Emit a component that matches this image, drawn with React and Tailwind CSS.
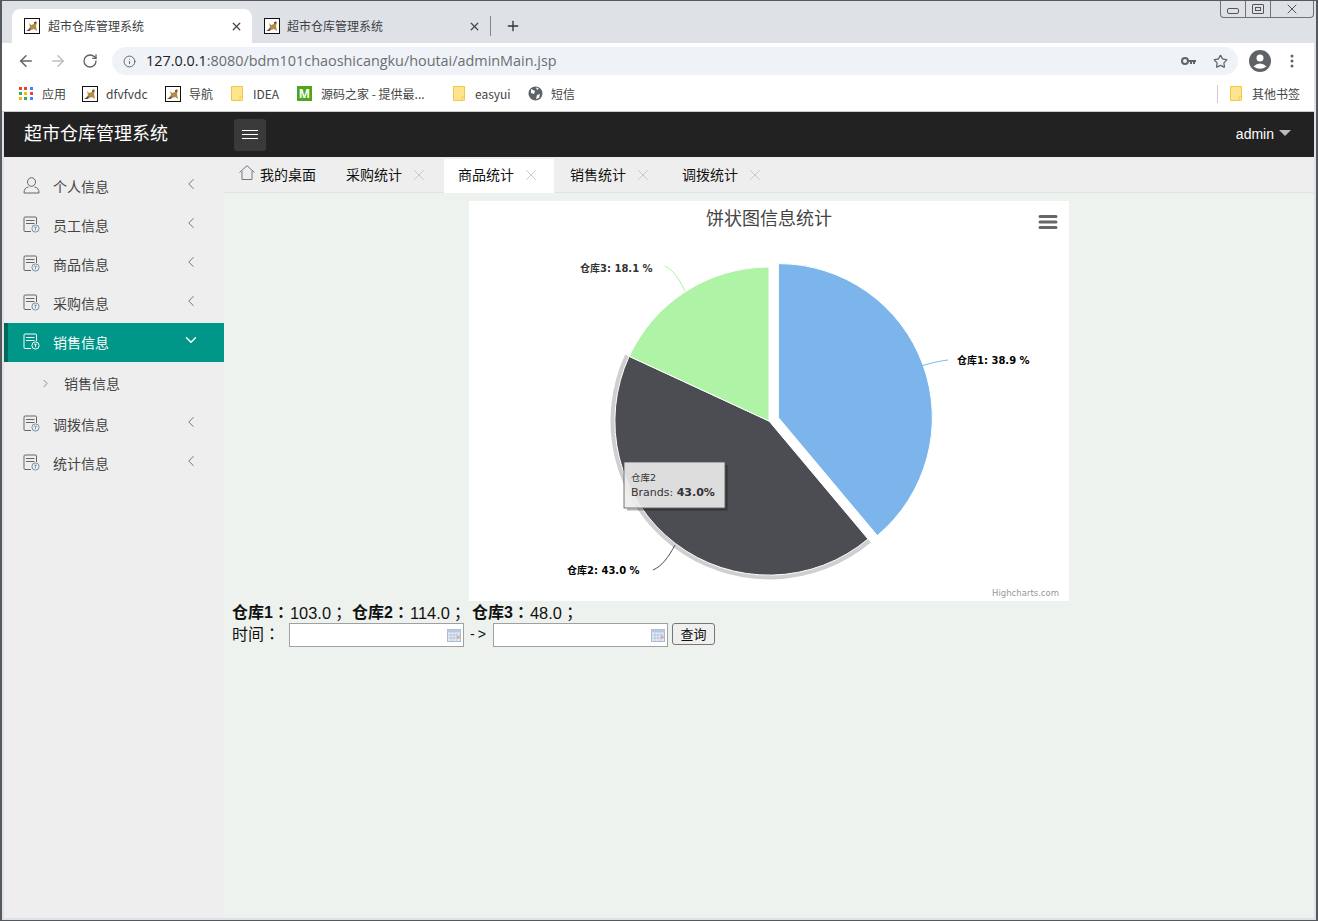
import React from "react";
import { ArrowLeft, ArrowRight, RotateCw, Info, Star, X, Plus, ChevronLeft, ChevronDown, ChevronRight } from "lucide-react";

const zh = { fontFamily: '"Noto Sans CJK SC", "Noto Sans", sans-serif' };

function Favicon() {
  return (
    <svg width="16" height="16" viewBox="0 0 16 16" className="shrink-0">
      <rect x="0.5" y="0.5" width="15" height="15" fill="#fff" stroke="#111" />
      <path d="M3 13 L6 9 L5 5 L7 7 L10 6 L11 3 L13 4 L12 8 L13 13 L10 11 L7 12 Z" fill="#b98a45" />
      <path d="M2 13 L7 10 L6 13 Z" fill="#555" />
      <circle cx="11" cy="5" r="1" fill="#6b4a1e" />
    </svg>
  );
}

function Folder() {
  return (
    <svg width="12" height="15" viewBox="0 0 12 15" className="shrink-0">
      <path d="M0.5 0.5 H11.5 V12.5 L9.5 14.5 H0.5 Z" fill="#fde58d" stroke="#f1c749" />
      <rect x="9" y="11" width="2.5" height="3.5" fill="#fde58d" stroke="#f1c749" strokeWidth="0.8" />
    </svg>
  );
}

function AppsIcon() {
  const colors = ["#ea4335", "#ea4335", "#4285f4", "#34a853", "#fbbc05", "#ea4335", "#fbbc05", "#34a853", "#4285f4"];
  return (
    <div className="grid grid-cols-3 gap-[2px] w-[14px] h-[14px] shrink-0">
      {colors.map((c, i) => (
        <svg key={i} width="3" height="3" viewBox="0 0 3 3"><rect width="3" height="3" fill={c} /></svg>
      ))}
    </div>
  );
}

function DocIcon({ color = "#666" }) {
  return (
    <svg width="17" height="17" viewBox="0 0 17 17" fill="none" className="shrink-0">
      <path d="M13.5 8 V2 Q13.5 1 12.5 1 H2 Q1 1 1 2 V14.5 Q1 15.5 2 15.5 H8" stroke={color} strokeWidth="1" />
      <path d="M3 4.5 H11.5 M3 7.5 H11.5" stroke={color} strokeWidth="1.2" />
      <circle cx="12.5" cy="12.5" r="3.6" stroke={color === "#666" ? "#7c8fa6" : color} strokeWidth="1" />
      <path d="M11.2 11.2 H13.8 M12.5 11.2 V14.4" stroke={color === "#666" ? "#7c8fa6" : color} strokeWidth="0.9" />
    </svg>
  );
}

function UserIcon() {
  return (
    <svg width="17" height="17" viewBox="0 0 17 17" fill="none" stroke="#666" strokeWidth="1" className="shrink-0">
      <ellipse cx="8.5" cy="5" rx="4" ry="4.3" />
      <path d="M1 16 Q1 10.5 5.5 10 M16 16 Q16 10.5 11.5 10 M1 16 H16" />
    </svg>
  );
}

function HomeIcon() {
  return (
    <svg width="16" height="15" viewBox="0 0 16 15" fill="none" stroke="#778" strokeWidth="1" className="shrink-0">
      <path d="M0.5 7.5 L8 0.7 L15.5 7.5 M3 6 V14.5 H13 V6" />
    </svg>
  );
}

function CalendarIcon() {
  return (
    <svg width="14" height="13" viewBox="0 0 14 13" className="shrink-0">
      <rect x="0.5" y="0.5" width="13" height="12" fill="#e6edf6" stroke="#a9bbd3" />
      <rect x="0.5" y="0.5" width="13" height="3" fill="#b8c9e0" />
      <path d="M1 6 H13 M1 9 H13 M4 4 V12 M7 4 V12 M10 4 V12" stroke="#a9bbd3" strokeWidth="0.7" />
      <rect x="10" y="7" width="2.5" height="2.5" fill="#e8a0a0" />
    </svg>
  );
}

function Tab({ active, label }) {
  return (
    <div className={active ? "flex items-center w-[240px] h-[34px] pl-[12px] pr-[9px] bg-white rounded-t-lg" : "flex items-center w-[238px] h-[34px] pl-[12px] pr-[9px]"}>
      <Favicon />
      <span className={active ? "ml-[8px] text-[12px] text-[#3c4043]" : "ml-[7px] text-[12px] text-[#3c4043]"} style={zh}>{label}</span>
      <X size={13} strokeWidth={2.4} className="ml-auto text-[#45484c]" />
    </div>
  );
}

function WindowButtons() {
  return (
    <div className="flex self-start ml-auto mr-[2px] h-[17px] border border-t-0 border-[#6f7276] rounded-b-[4px]">
      <div className="w-[25px] flex items-center justify-center border-r border-[#6f7276]">
        <div className="w-[12px] h-[6px] mt-[4px] border border-[#555] rounded-[2px]" />
      </div>
      <div className="w-[25px] flex items-center justify-center border-r border-[#6f7276]">
        <div className="w-[12px] h-[10px] border border-[#555] rounded-[1px] flex items-center justify-center">
          <div className="w-[6px] h-[4px] border border-[#555]" />
        </div>
      </div>
      <div className="w-[42px] flex items-center justify-center">
        <X size={16} strokeWidth={1.5} className="text-[#555]" />
      </div>
    </div>
  );
}

function Bookmark({ icon, label, width }) {
  return (
    <div className={`flex items-center shrink-0 ${width}`}>
      {icon}
      <span className="text-[12px] text-[#444]" style={zh}>{label}</span>
    </div>
  );
}

function MenuRow({ icon, label, active }) {
  return (
    <div className={active ? "flex items-center h-[39px] pl-[15px] pr-[24px] bg-[#009688] border-l-[4px] border-[#00695c] text-white" : "flex items-center h-[39px] pl-[19px] pr-[24px] text-[#444]"}>
      <div className="w-[30px] -mt-[2px]">{icon}</div>
      <span className="text-[14px]" style={zh}>{label}</span>
      <div className="ml-auto -mt-[6px]">
        {active ? <ChevronDown size={18} strokeWidth={2} /> : <ChevronLeft size={18} strokeWidth={1.2} className="text-[#666]" />}
      </div>
    </div>
  );
}

function PageTab({ label, active }) {
  return (
    <div className={active ? "flex items-center h-[34px] w-[110px] pl-[14px] pb-[4px] mt-[2px] mr-[2px] bg-white" : "flex items-center h-[34px] w-[112px] pl-[14px] pb-[4px] mt-[2px]"}>
      <span className="text-[14px] text-[#111] w-[56px]" style={zh}>{label}</span>
      <X size={18} strokeWidth={1} className="ml-[8px] mt-[2px] text-[#bbb]" />
    </div>
  );
}

function PieChart() {
  return (
    <svg width="600" height="400" viewBox="469 201 600 400" className="block bg-white">
      <text x="769" y="225" textAnchor="middle" fontSize="18" fill="#444" style={zh}>饼状图信息统计</text>
      <path d="M1040 216.5 H1056 M1040 222 H1056 M1040 227.5 H1056" stroke="#666" strokeWidth="3" strokeLinecap="round" />

      <path d="M869.2 540.5 A156 156 0 0 1 627.4 355.5" fill="none" stroke="#cfcfcf" strokeWidth="5" />
      <path d="M778.4 417.6 L778.4 263.6 A154 154 0 0 1 877.3 535.6 Z" fill="#7cb5ec" stroke="#fff" />
      <path d="M769 421 L868 539 A154 154 0 0 1 629.2 356.3 Z" fill="#4b4d52" stroke="#fff" />
      <path d="M769 421 L629.2 356.3 A154 154 0 0 1 769 267 Z" fill="#aef3a6" stroke="#fff" />

      <path d="M921 366 C935 362 940 361 948 360" fill="none" stroke="#7cb5ec" />
      <path d="M685 291 C678 277 673 270 665 266" fill="none" stroke="#aef3a6" />
      <path d="M675 545 C668 558 662 566 653 570" fill="none" stroke="#4b4d52" />

      <g fontSize="10" fontWeight="700" fill="#000" style={{ fontFamily: '"DejaVu Sans", "Noto Sans CJK SC", sans-serif' }}>
        <text x="957" y="364">仓库1: 38.9 %</text>
        <text x="580" y="272" fill="#333">仓库3: 18.1 %</text>
        <text x="567" y="574">仓库2: 43.0 %</text>
      </g>

      <path d="M726.5 465 V509.5 H627" fill="none" stroke="#000" strokeOpacity="0.3" strokeWidth="2" />
      <rect x="624" y="462" width="101" height="46" fill="#ececec" fillOpacity="0.905" stroke="#555" strokeWidth="0.8" />
      <g fill="#333" style={{ fontFamily: '"DejaVu Sans", "Noto Sans CJK SC", sans-serif' }}>
        <text x="631" y="481" fontSize="9.5">仓库2</text>
        <text x="631" y="496" fontSize="11">Brands: <tspan fontWeight="700">43.0%</tspan></text>
      </g>

      <text x="1059" y="596" textAnchor="end" fontSize="8.5" fill="#999" style={{ fontFamily: '"DejaVu Sans", sans-serif' }}>Highcharts.com</text>
    </svg>
  );
}

function DateInput() {
  return (
    <div className="flex items-center justify-end w-[175px] h-[24px] pr-[2px] bg-white border border-[#a0a0a0]">
      <CalendarIcon />
    </div>
  );
}

export default function App() {
  return (
    <div className="flex flex-col w-[1318px] h-[921px] overflow-hidden bg-[#dee1e6] border-t border-x-[2px] border-b border-[#55585c]" style={{ fontFamily: '"Open Sans", "Noto Sans CJK SC", sans-serif' }}>
      {/* browser tabs */}
      <div className="flex items-end h-[42px] pl-[10px] shrink-0">
        <Tab active label="超市仓库管理系统" />
        <Tab label="超市仓库管理系统" />
        <div className="w-px h-[20px] mb-[7px] bg-[#888]" />
        <Plus size={16} strokeWidth={2} className="ml-[14px] mb-[9px] text-[#333]" />
        <WindowButtons />
      </div>

      {/* toolbar */}
      <div className="flex items-center h-[37px] pb-[1px] mr-[2px] bg-white shrink-0">
        <ArrowLeft size={18} strokeWidth={2} className="ml-[15px] text-[#5f6368]" />
        <ArrowRight size={18} strokeWidth={2} className="ml-[14px] text-[#bcbec2]" />
        <RotateCw size={16} strokeWidth={2} className="ml-[15px] text-[#5f6368]" />
        <div className="flex items-center w-[1126px] h-[28px] ml-[14px] pl-[11px] pr-[10px] rounded-full bg-[#eff3f8]">
          <Info size={13} strokeWidth={1.8} className="text-[#5f6368]" />
          <span className="ml-[10px] text-[14.4px] text-[#6b6e72]"><span className="text-[#222]">127.0.0.1</span>:8080/bdm101chaoshicangku/houtai/adminMain.jsp</span>
          <svg width="15" height="8" viewBox="0 0 15 8" className="ml-auto" fill="#5f6368">
            <circle cx="4" cy="4" r="3" fill="none" stroke="#5f6368" strokeWidth="2" />
            <path d="M6 3 H15 V5 H14 V7 H12 V5 H11 V7 H9 V5 H6 Z" />
          </svg>
          <Star size={15} strokeWidth={2} className="ml-[17px] text-[#5f6368]" />
        </div>
        <svg width="22" height="22" viewBox="0 0 22 22" className="ml-[11px]">
          <circle cx="11" cy="11" r="11" fill="#5f6368" />
          <circle cx="11" cy="8" r="3.5" fill="#fff" />
          <path d="M4.5 16.5 Q11 10.5 17.5 16.5 Q11 21 4.5 16.5 Z" fill="#fff" />
        </svg>
        <svg width="4" height="14" viewBox="0 0 4 14" className="ml-[19px]" fill="#5f6368">
          <circle cx="2" cy="2" r="1.5" /><circle cx="2" cy="7" r="1.5" /><circle cx="2" cy="12" r="1.5" />
        </svg>
      </div>

      {/* bookmarks */}
      <div className="flex items-center h-[32px] pb-[4px] pl-[17px] mr-[2px] bg-white border-b border-[#ccc] shrink-0">
        <Bookmark width="w-[63px]" icon={<div className="mr-[9px]"><AppsIcon /></div>} label="应用" />
        <Bookmark width="w-[83px]" icon={<div className="mr-[8px]"><Favicon /></div>} label="dfvfvdc" />
        <Bookmark width="w-[66px]" icon={<div className="mr-[8px]"><Favicon /></div>} label="导航" />
        <Bookmark width="w-[66px]" icon={<div className="mr-[10px]"><Folder /></div>} label="IDEA" />
        <div className="flex items-center w-[156px] shrink-0">
          <div className="flex items-center justify-center w-[15px] h-[15px] mr-[9px] bg-[#4fa61c] text-white text-[12px] font-bold">M</div>
          <span className="text-[12px] text-[#444]" style={zh}>源码之家 - 提供最...</span>
        </div>
        <Bookmark width="w-[75px]" icon={<div className="mr-[10px]"><Folder /></div>} label="easyui" />
        <div className="flex items-center w-[60px] shrink-0">
          <svg width="15" height="15" viewBox="0 0 15 15" className="mr-[8px]">
            <circle cx="7.5" cy="7.5" r="7" fill="#5f6368" />
            <path d="M3 3 L7 5 L6 8 L3 7 Z M9 9 L12 8 L11 12 L8 13 Z M8 1.5 L11 2.5 L9 4 Z" fill="#fff" />
          </svg>
          <span className="text-[12px] text-[#444]" style={zh}>短信</span>
        </div>
        <div className="w-px h-[18px] ml-[629px] bg-[#ccc]" />
        <div className="ml-[12px] mr-[8px]"><Folder /></div>
        <span className="ml-[2px] text-[12px] text-[#444]" style={zh}>其他书签</span>
      </div>

      {/* page */}
      <div className="flex flex-col flex-1 ml-[2px] mr-[2px] mb-[2px] min-h-0 bg-[#eef2ef]">
        <div className="flex items-center h-[45px] bg-[#222] shrink-0">
          <span className="ml-[20px] -mt-[4px] text-[18px] text-white" style={zh}>超市仓库管理系统</span>
          <div className="flex flex-col items-center justify-center gap-[3px] w-[32px] h-[32px] ml-[66px] rounded-[3px] bg-[#3a3a3a]">
            <div className="w-[16px] h-[1px] bg-white" />
            <div className="w-[16px] h-[1px] bg-white" />
            <div className="w-[16px] h-[1px] bg-white" />
          </div>
          <span className="ml-auto text-[14px] text-white" style={{ fontFamily: '"Liberation Sans", sans-serif' }}>admin</span>
          <svg width="12" height="6" viewBox="0 0 12 6" className="ml-[5px] mr-[23px] -mt-[3px]"><path d="M0 0 H12 L6 6 Z" fill="#bbb" /></svg>
        </div>

        <div className="flex flex-1 min-h-0">
          <aside className="flex flex-col w-[220px] pt-[10px] bg-[#eee] shrink-0">
            <MenuRow icon={<UserIcon />} label="个人信息" />
            <MenuRow icon={<DocIcon />} label="员工信息" />
            <MenuRow icon={<DocIcon />} label="商品信息" />
            <MenuRow icon={<DocIcon />} label="采购信息" />
            <MenuRow active icon={<DocIcon color="#fff" />} label="销售信息" />
            <div className="flex items-center h-[43px] pl-[35px] text-[#444]">
              <ChevronRight size={13} strokeWidth={1.3} className="text-[#666]" />
              <span className="ml-[12px] text-[14px]" style={zh}>销售信息</span>
            </div>
            <MenuRow icon={<DocIcon />} label="调拨信息" />
            <MenuRow icon={<DocIcon />} label="统计信息" />
          </aside>

          <main className="flex-1 min-w-0">
            <div className="flex h-[36px] bg-[#eee] border-b border-[#e2e4e2]">
              <div className="flex items-start w-[108px] pl-[15px] pt-[8px]">
                <HomeIcon />
                <span className="ml-[5px] -mt-[1px] text-[14px] text-[#111]" style={zh}>我的桌面</span>
              </div>
              <PageTab label="采购统计" />
              <PageTab active label="商品统计" />
              <PageTab label="销售统计" />
              <PageTab label="调拨统计" />
            </div>
            <div className="w-[600px] mt-[8px] mx-auto">
              <PieChart />
            </div>
            <div className="pl-[8px] text-[16.4px] leading-[22px] text-[#111]" style={{ fontFamily: '"Liberation Sans", "Noto Sans CJK TC", sans-serif' }}>
              <div className="flex h-[22px] pt-[1px]">
                <b className="w-[58px] text-[16px] font-bold">仓库1：</b><span className="w-[62px]">103.0；</span>
                <b className="w-[58px] text-[16px] font-bold">仓库2：</b><span className="w-[62px]">114.0；</span>
                <b className="w-[58px] text-[16px] font-bold">仓库3：</b><span>48.0；</span>
              </div>
              <div className="flex items-start">
                <span className="w-[57px] pt-[1px] text-[16px]">时间：</span>
                <DateInput />
                <span className="w-[29px] pl-[6px] text-[14px] tracking-[3px]">-&gt;</span>
                <DateInput />
                <button className="w-[43px] h-[22px] ml-[4px] pb-[2px] text-[13px] leading-[20px] bg-[#efefef] border border-[#767676] rounded-[3px]" style={zh}>查询</button>
              </div>
            </div>
          </main>
        </div>
      </div>
    </div>
  );
}
